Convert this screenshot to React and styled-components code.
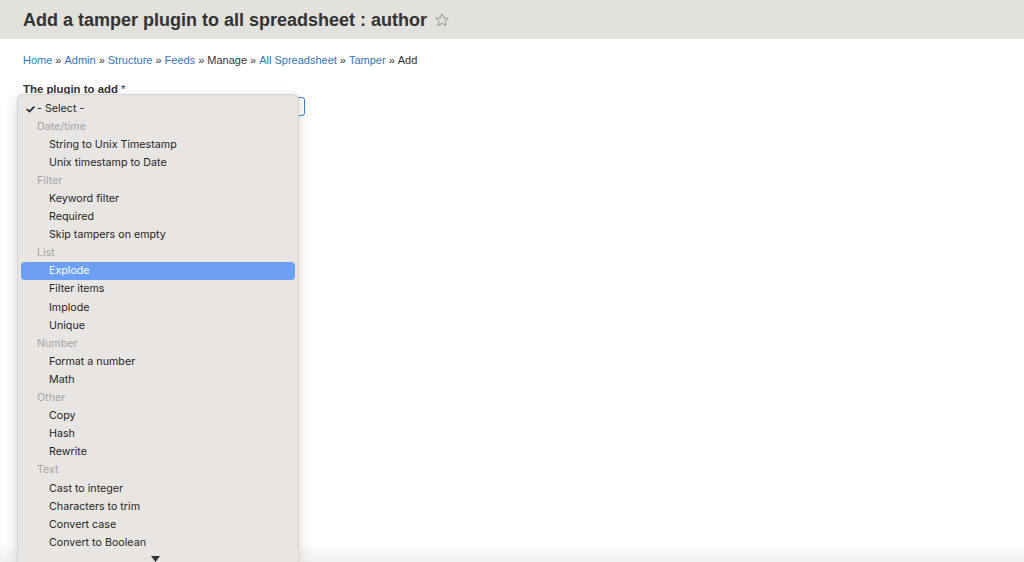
import React from "react";
import styled, { createGlobalStyle } from "styled-components";

const GlobalStyle = createGlobalStyle`
  html, body {
    margin: 0;
    height: 100%;
    overflow: hidden;
  }
  body {
    background: linear-gradient(to bottom, #ffffff calc(100% - 20px), #f1f1f1 100%);
    font-family: "Liberation Sans", Arial, sans-serif;
    color: #333;
  }
`;

const groups = [
  { label: "Date/time", items: ["String to Unix Timestamp", "Unix timestamp to Date"] },
  { label: "Filter", items: ["Keyword filter", "Required", "Skip tampers on empty"] },
  { label: "List", items: ["Explode", "Filter items", "Implode", "Unique"] },
  { label: "Number", items: ["Format a number", "Math"] },
  { label: "Other", items: ["Copy", "Hash", "Rewrite"] },
  {
    label: "Text",
    items: ["Cast to integer", "Characters to trim", "Convert case", "Convert to Boolean"],
  },
];

const crumbs = [
  { text: "Home", link: true },
  { text: "Admin", link: true },
  { text: "Structure", link: true },
  { text: "Feeds", link: true },
  { text: "Manage", link: false },
  { text: "All Spreadsheet", link: true },
  { text: "Tamper", link: true },
  { text: "Add", link: false },
];

const Header = styled.header`
  height: 39px;
  background: #e2e1db;
  display: flex;
  align-items: center;
  padding: 0 23px;
`;

const Title = styled.h1`
  margin: 0;
  font-size: 18px;
  font-weight: bold;
  color: #333;
  display: flex;
  align-items: center;
  gap: 7px;
  padding-top: 2px;
`;

const Star = styled.svg`
  width: 16px;
  height: 16px;
  margin-top: -2px;
`;

const Content = styled.main`
  padding: 14px 23px 0;
`;

const Breadcrumb = styled.nav`
  font-size: 11px;
  color: #333;
  line-height: 14px;
`;

const Crumb = styled.a`
  color: ${(p) => (p.$link ? "#3474b9" : "#333")};
  text-decoration: none;
`;

const Sep = styled.span`
  margin: 0 3px;
`;

const FormItem = styled.div`
  position: relative;
  margin-top: 15px;
`;

const Label = styled.label`
  display: block;
  font-size: 11.4px;
  font-weight: bold;
  color: #333;
  line-height: 14px;
`;

const Required = styled.span`
  font-weight: normal;
  margin-left: 3px;
`;

const SelectBox = styled.div`
  margin-top: 1px;
  width: 280px;
  height: 17px;
  border: 1px solid #3d7ed4;
  border-radius: 3px;
  background: #fff;
`;

const Menu = styled.div`
  position: absolute;
  left: -6px;
  top: 12px;
  width: 282px;
  height: 468px;
  background: #e9e5e3;
  border: 1px solid #d6d2d0;
  border-bottom: none;
  border-radius: 6px 6px 0 0;
  box-shadow: 0 4px 14px rgba(0, 0, 0, 0.16);
  padding: 4px 3px 0;
  box-sizing: border-box;
  font-family: Inter, "Liberation Sans", sans-serif;
  font-size: 10.7px;
  overflow: hidden;
`;

const Row = styled.div`
  height: 18.1px;
  display: flex;
  align-items: center;
  border-radius: 4px;
  padding-left: ${(p) => p.$indent}px;
  color: ${(p) => (p.$group ? "#a5a3a2" : p.$active ? "#fff" : "#262626")};
  background: ${(p) => (p.$active ? "#6ba0f5" : "transparent")};
`;

const Check = styled.span`
  width: 12px;
  font-size: 12px;
  font-weight: bold;
`;

const ScrollArrow = styled.div`
  display: flex;
  justify-content: center;
  padding-top: 5px;
  margin-left: -6px;
`;

function StarIcon() {
  return (
    <Star viewBox="0 0 24 24" fill="none" stroke="#8a8a87" strokeWidth="1.3">
      <path d="M12 2.8l2.75 6.1 6.6.6-5 4.4 1.5 6.5L12 17l-5.85 3.4 1.5-6.5-5-4.4 6.6-.6z" />
    </Star>
  );
}

export default function App() {
  return (
    <>
      <GlobalStyle />
      <Header>
        <Title>
          Add a tamper plugin to all spreadsheet : author
          <StarIcon />
        </Title>
      </Header>
      <Content>
        <Breadcrumb>
          {crumbs.map((c, i) => (
            <React.Fragment key={c.text}>
              {i > 0 && <Sep>»</Sep>}
              <Crumb $link={c.link} href={c.link ? "#" : undefined}>
                {c.text}
              </Crumb>
            </React.Fragment>
          ))}
        </Breadcrumb>
        <FormItem>
          <Label>
            The plugin to add<Required>*</Required>
          </Label>
          <SelectBox />
          <Menu>
            <Row $indent={4}>
              <Check>✓</Check>- Select -
            </Row>
            {groups.map((g) => (
              <React.Fragment key={g.label}>
                <Row $group $indent={16}>
                  {g.label}
                </Row>
                {g.items.map((item) => (
                  <Row key={item} $indent={28} $active={item === "Explode"}>
                    {item}
                  </Row>
                ))}
              </React.Fragment>
            ))}
            <ScrollArrow>
              <svg width="9" height="6" viewBox="0 0 9 6">
                <path d="M0 0h9L4.5 6z" fill="#333" />
              </svg>
            </ScrollArrow>
          </Menu>
        </FormItem>
      </Content>
    </>
  );
}
